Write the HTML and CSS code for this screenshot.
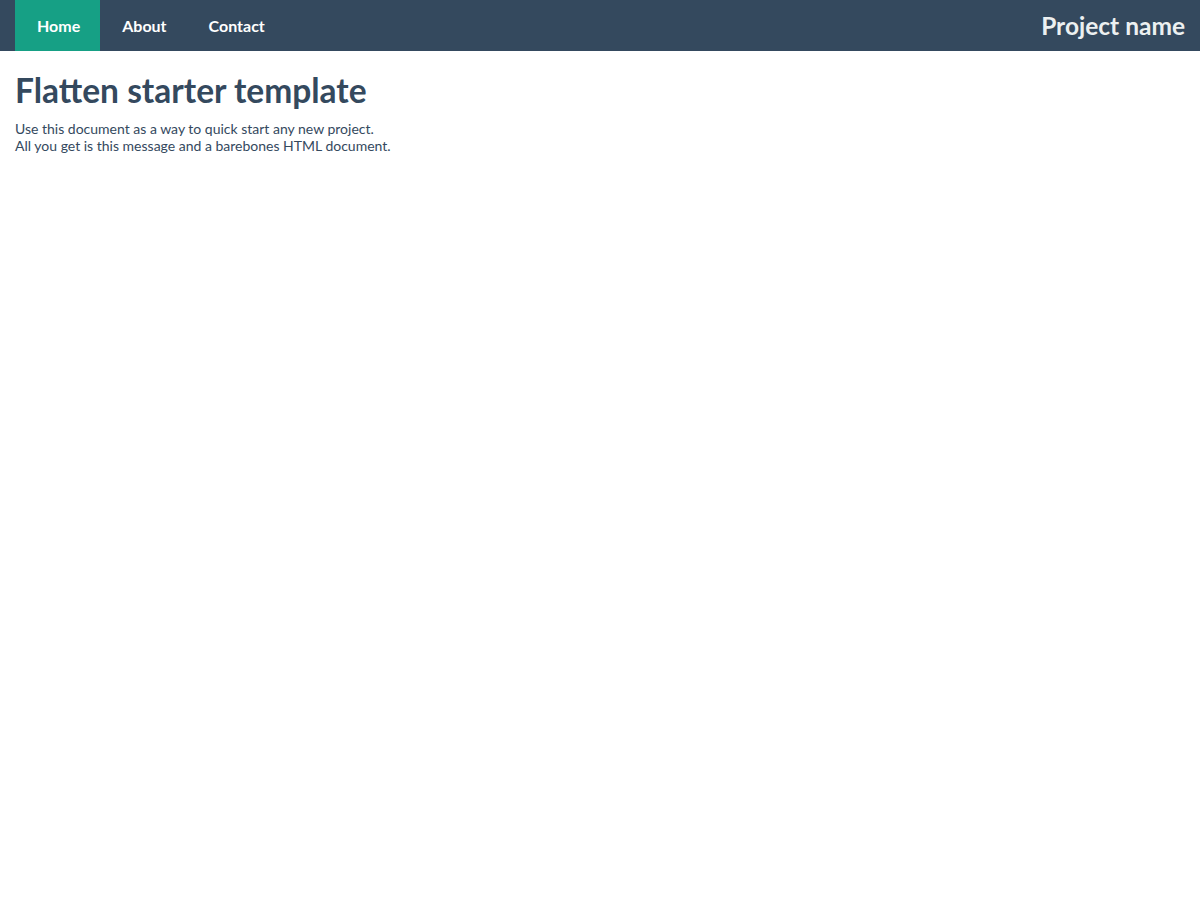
FILE: index.html
```html
<!DOCTYPE html>
<html lang="en">
<head>
<meta charset="utf-8">
<title>Flatten starter template</title>
<link rel="stylesheet" href="styles.css">
</head>
<body>
<header class="navbar">
  <nav class="nav">
    <a class="nav-link active" href="#">Home</a>
    <a class="nav-link" href="#">About</a>
    <a class="nav-link" href="#">Contact</a>
  </nav>
  <a class="brand" href="#">Project name</a>
</header>
<main class="content">
  <h1 class="title">Flatten starter template</h1>
  <p class="lead">Use this document as a way to quick start any new project.<br>All you get is this message and a barebones HTML document.</p>
</main>
</body>
</html>
```
FILE: styles.css
```css
html, body {
  margin: 0;
  padding: 0;
  background: #ffffff;
  font-family: Lato, "Liberation Sans", sans-serif;
  color: #34495e;
}
.navbar {
  display: flex;
  align-items: stretch;
  justify-content: space-between;
  height: 51px;
  background: #34495e;
  padding: 0 15px;
}
.nav {
  display: flex;
  align-items: stretch;
}
.nav-link {
  display: flex;
  align-items: center;
  padding: 0 20px 0 22px;
  color: #ffffff;
  font-weight: 700;
  font-size: 16px;
  text-decoration: none;
}
.nav-link.active {
  background: #16a085;
}
.brand {
  display: flex;
  align-items: center;
  color: #ecf0f1;
  font-weight: 700;
  font-size: 24.5px;
  text-decoration: none;
}
.content {
  padding: 0 15px;
}
.title {
  margin: 19px 0 0;
  font-size: 33.5px;
  font-weight: 700;
  line-height: 40px;
  color: #34495e;
}
.lead {
  margin: 10px 0 0;
  font-size: 14px;
  line-height: 17px;
  color: #34495e;
}
```
